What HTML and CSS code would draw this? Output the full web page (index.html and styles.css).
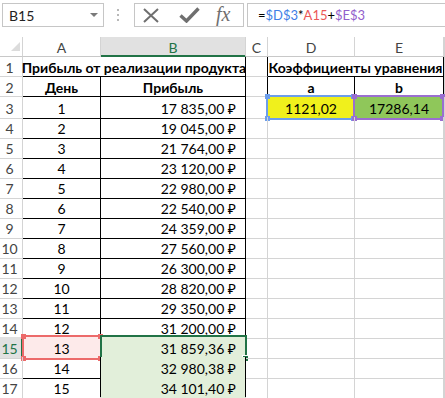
FILE: index.html
```html
<!DOCTYPE html>
<html lang="ru">
<head>
    <meta charset="UTF-8">
    <title>Прибыль от реализации продукта</title>
    <link rel="stylesheet" href="styles.css">
</head>
<body>
    <div class="formula-bar">
        <div class="name-box">
            <span class="name">B15</span>
            <span class="caret"></span>
        </div>
        <div class="grip"><i></i><i></i><i></i></div>
        <div class="tools">
            <svg class="icon-cancel" viewBox="0 0 16 15" width="16" height="15">
                <path d="M1 1 L15 14 M15 1 L1 14" stroke="#6f6f6f" stroke-width="2" fill="none"/>
            </svg>
            <svg class="icon-enter" viewBox="0 0 21 16" width="21" height="16">
                <path d="M1.5 8.5 L7.5 14 L19.5 1.5" stroke="#6f6f6f" stroke-width="3.4" fill="none"/>
            </svg>
            <span class="fx">fx</span>
        </div>
        <div class="formula">=<span class="f-d">$D$3</span>*<span class="f-a">A15</span>+<span class="f-e">$E$3</span></div>
    </div>

    <div class="sheet">
        <div class="row head">
            <div class="corner"><span class="tri"></span></div>
            <div>A</div>
            <div class="col-sel">B</div>
            <div>C</div>
            <div>D</div>
            <div>E</div>
            <div></div>
        </div>

        <div class="row">
            <div class="rh">1</div>
            <div class="b bold span2">Прибыль от реализации продукта</div>
            <div class="bk-r"></div>
            <div class="b bold span2">Коэффициенты уравнения</div>
            <div></div>
        </div>
        <div class="row">
            <div class="rh">2</div>
            <div class="b bold">День</div>
            <div class="b bold">Прибыль</div>
            <div class="bk-r"></div>
            <div class="b bold">a</div>
            <div class="b bold">b</div>
            <div></div>
        </div>
        <div class="row">
            <div class="rh">3</div>
            <div class="b">1</div>
            <div class="b num">17&nbsp;835,00&nbsp;₽</div>
            <div></div>
            <div class="yellow">1121,02<span class="ref ref-blue"><i class="tl"></i><i class="tr"></i><i class="bl"></i><i class="br"></i></span></div>
            <div class="green">17286,14<span class="ref ref-purple"><i class="tl"></i><i class="tr"></i><i class="bl"></i><i class="br"></i></span></div>
            <div></div>
        </div>
        <div class="row">
            <div class="rh">4</div>
            <div class="b">2</div>
            <div class="b num">19&nbsp;045,00&nbsp;₽</div>
            <div></div><div></div><div></div><div></div>
        </div>
        <div class="row">
            <div class="rh">5</div>
            <div class="b">3</div>
            <div class="b num">21&nbsp;764,00&nbsp;₽</div>
            <div></div><div></div><div></div><div></div>
        </div>
        <div class="row">
            <div class="rh">6</div>
            <div class="b">4</div>
            <div class="b num">23&nbsp;120,00&nbsp;₽</div>
            <div></div><div></div><div></div><div></div>
        </div>
        <div class="row">
            <div class="rh">7</div>
            <div class="b">5</div>
            <div class="b num">22&nbsp;980,00&nbsp;₽</div>
            <div></div><div></div><div></div><div></div>
        </div>
        <div class="row">
            <div class="rh">8</div>
            <div class="b">6</div>
            <div class="b num">22&nbsp;540,00&nbsp;₽</div>
            <div></div><div></div><div></div><div></div>
        </div>
        <div class="row">
            <div class="rh">9</div>
            <div class="b">7</div>
            <div class="b num">24&nbsp;359,00&nbsp;₽</div>
            <div></div><div></div><div></div><div></div>
        </div>
        <div class="row">
            <div class="rh">10</div>
            <div class="b">8</div>
            <div class="b num">27&nbsp;560,00&nbsp;₽</div>
            <div></div><div></div><div></div><div></div>
        </div>
        <div class="row">
            <div class="rh">11</div>
            <div class="b">9</div>
            <div class="b num">26&nbsp;300,00&nbsp;₽</div>
            <div></div><div></div><div></div><div></div>
        </div>
        <div class="row">
            <div class="rh">12</div>
            <div class="b">10</div>
            <div class="b num">28&nbsp;820,00&nbsp;₽</div>
            <div></div><div></div><div></div><div></div>
        </div>
        <div class="row">
            <div class="rh">13</div>
            <div class="b">11</div>
            <div class="b num">29&nbsp;350,00&nbsp;₽</div>
            <div></div><div></div><div></div><div></div>
        </div>
        <div class="row">
            <div class="rh">14</div>
            <div class="b">12</div>
            <div class="b num">31&nbsp;200,00&nbsp;₽</div>
            <div></div><div></div><div></div><div></div>
        </div>
        <div class="row">
            <div class="rh row-sel">15</div>
            <div class="b pink">13<span class="ref ref-red"><i class="tl"></i><i class="tr"></i><i class="bl"></i><i class="br"></i></span></div>
            <div class="b num tint">31&nbsp;859,36&nbsp;₽<span class="active"><i class="handle"></i></span></div>
            <div></div><div></div><div></div><div></div>
        </div>
        <div class="row">
            <div class="rh">16</div>
            <div class="b">14</div>
            <div class="b num tint">32&nbsp;980,38&nbsp;₽</div>
            <div></div><div></div><div></div><div></div>
        </div>
        <div class="row">
            <div class="rh">17</div>
            <div class="b">15</div>
            <div class="b num tint">34&nbsp;101,40&nbsp;₽</div>
            <div></div><div></div><div></div><div></div>
        </div>
        <div class="row">
            <div class="rh"></div>
            <div></div><div></div><div></div><div></div><div></div><div></div>
        </div>
    </div>
</body>
</html>
```

FILE: styles.css
```css
body {
    margin: 0;
    width: 445px;
    height: 398px;
    overflow: hidden;
    background: #fff;
    font-family: Lato, "Noto Sans", sans-serif;
    color: #000;
}

/* formula bar */

.formula-bar {
    display: flex;
    align-items: flex-start;
    height: 37px;
    padding: 3px 0 0 2px;
    box-sizing: border-box;
}

.name-box {
    width: 102px;
    height: 24px;
    box-sizing: border-box;
    border: 1px solid #c6c6c6;
    display: flex;
    align-items: center;
    padding-left: 6px;
    font-size: 14px;
    color: #222;
}

.name-box .name {
    flex: 1;
}

.caret {
    width: 0;
    height: 0;
    border-left: 4px solid transparent;
    border-right: 4px solid transparent;
    border-top: 4px solid #7a7a7a;
    margin-right: 5px;
}

.grip {
    display: flex;
    flex-direction: column;
    gap: 3px;
    margin: 6px 0 0 13px;
}

.grip i {
    width: 2px;
    height: 2px;
    background: #b8b8b8;
}

.tools {
    width: 110px;
    height: 24px;
    box-sizing: border-box;
    margin-left: 15px;
    border: 1px solid #c6c6c6;
    display: flex;
    align-items: center;
}

.icon-cancel {
    margin-left: 8px;
}

.icon-enter {
    margin-left: 20px;
}

.fx {
    margin-left: 16px;
    font-family: "Liberation Serif", serif;
    font-style: italic;
    font-size: 20px;
    color: #6f6f6f;
    margin-top: -2px;
}

.formula {
    flex: 1;
    height: 24px;
    box-sizing: border-box;
    margin-left: 3px;
    border: 1px solid #c6c6c6;
    border-right: none;
    display: flex;
    align-items: center;
    padding-left: 10px;
    font-size: 13px;
    white-space: pre;
}

.f-d { color: #3f7fe6; }
.f-a { color: #eb5757; }
.f-e { color: #9260cc; }

/* sheet */

.row {
    display: grid;
    grid-template-columns: 23px 78px 145px 22px 87px 89px 1fr;
    height: 20px;
}

.row > div {
    position: relative;
    box-sizing: border-box;
    border-right: 1px solid #d4d4d4;
    border-bottom: 1px solid #d4d4d4;
    display: flex;
    align-items: center;
    justify-content: center;
    padding-top: 2px;
    font-size: 14px;
    white-space: nowrap;
}

.head > div {
    color: #444;
    border-bottom-color: #c8c8c8;
}

.head > .corner {
    justify-content: flex-end;
    align-items: flex-end;
    padding: 0 2px 5px 0;
}

.tri {
    width: 0;
    height: 0;
    border-left: 9px solid transparent;
    border-bottom: 9px solid #dcdcdc;
}

.head > .col-sel {
    background: #e1e1e1;
    color: #217346;
    border-bottom-color: #217346;
    box-shadow: inset 0 -1px 0 #217346;
}

.rh {
    color: #444;
    padding-right: 3px;
}

.rh.row-sel {
    background: #e1e1e1;
    color: #217346;
    border-right-color: #217346;
    box-shadow: inset -1px 0 0 #217346;
}

.span2 {
    grid-column: span 2;
}

.row > .b {
    border-right-color: #000;
    border-bottom-color: #000;
}

.row > .bk-r {
    border-right-color: #000;
}

.bold {
    font-weight: bold;
}

.row > .num {
    justify-content: flex-end;
    padding-right: 9px;
}

.yellow { background: #f0f01c; }
.green { background: #8fc75a; }
.pink { background: #fdeaea; }
.tint { background: #e2efda; }

/* reference highlights drawn over the grid */

.ref {
    position: absolute;
    top: -2px;
    bottom: -2px;
    border: 2px solid;
}

.ref i {
    position: absolute;
    width: 5px;
    height: 5px;
}

.ref .tl { top: -3px; left: -3px; }
.ref .tr { top: -3px; right: -3px; }
.ref .bl { bottom: -3px; left: -3px; }
.ref .br { bottom: -3px; right: -3px; }

.ref-blue {
    left: -2px;
    right: -1px;
    border-color: #6d9eeb;
}

.ref-blue i { background: #6d9eeb; }

.ref-purple {
    left: -2px;
    right: -1px;
    border-color: #9a6fd0;
}

.ref-purple i { background: #9a6fd0; }

.ref-red {
    left: -1px;
    right: -2px;
    border-color: #ec6a6a;
}

.ref-red i { background: #ec6a6a; }

.active {
    position: absolute;
    top: -2px;
    bottom: -2px;
    left: -1px;
    right: -2px;
    border: 2px solid #217346;
}

.handle {
    position: absolute;
    right: -4px;
    bottom: -4px;
    width: 5px;
    height: 5px;
    background: #217346;
    border: 1px solid #fff;
}
```
